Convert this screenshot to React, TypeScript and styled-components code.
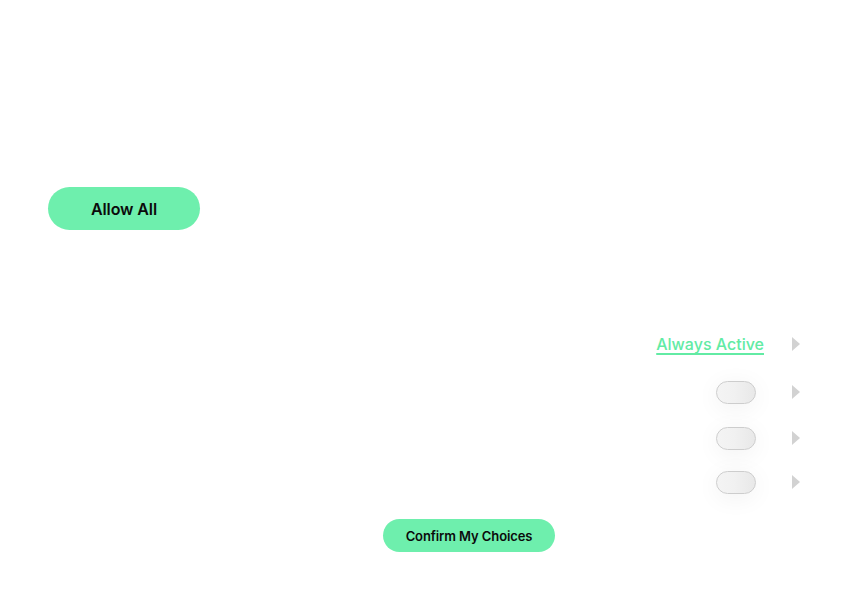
import React from 'react';
import styled, { createGlobalStyle } from 'styled-components';

const GlobalStyle = createGlobalStyle`
  html, body {
    margin: 0;
    padding: 0;
    background: #ffffff;
  }
  body {
    font-family: Inter, 'Liberation Sans', sans-serif;
    color: #111111;
  }
`;

const Panel = styled.div`
  width: 864px;
  height: 600px;
  box-sizing: border-box;
  padding: 187px 64px 0 48px;
  display: flex;
  flex-direction: column;
`;

const PillButton = styled.button<{ $size?: 'lg' | 'sm' }>`
  align-self: flex-start;
  border: none;
  border-radius: 999px;
  background: #6eefad;
  color: #0b0b0b;
  font-family: inherit;
  font-weight: 600;
  cursor: pointer;
  width: ${(p) => (p.$size === 'sm' ? '172px' : '152px')};
  height: ${(p) => (p.$size === 'sm' ? '33px' : '43px')};
  font-size: ${(p) => (p.$size === 'sm' ? '13px' : '16px')};
  letter-spacing: -0.1px;
`;

const CategoryList = styled.div`
  margin-top: 89px;
  display: flex;
  flex-direction: column;
`;

const CategoryRow = styled.div<{ $height: number }>`
  height: ${(p) => p.$height}px;
  display: flex;
  align-items: center;
  justify-content: flex-end;
  gap: 28px;
`;

const ActiveLabel = styled.a`
  color: #62eba4;
  font-size: 16px;
  font-weight: 500;
  text-decoration: underline;
  text-decoration-thickness: 1.5px;
  text-underline-offset: 3px;
  cursor: pointer;
`;

const Toggle = styled.span`
  display: block;
  width: 40px;
  height: 23px;
  box-sizing: border-box;
  border: 1px solid #cdcdcd;
  border-radius: 12px;
  background: linear-gradient(90deg, #f4f4f4 0%, #f1f1f1 45%, #e8e8e8 100%);
  box-shadow: 0 4px 24px rgba(0, 0, 0, 0.06);
  margin-right: 8px;
`;

const Caret = styled.span`
  display: block;
  width: 0;
  height: 0;
  border-top: 7px solid transparent;
  border-bottom: 7px solid transparent;
  border-left: 8px solid #d2d2d2;
`;

const Footer = styled.div`
  margin-top: 16px;
  padding-left: 335px;
  display: flex;
`;

const categories = [
  { id: 'necessary', active: true, height: 50 },
  { id: 'performance', active: false, height: 46 },
  { id: 'functional', active: false, height: 46 },
  { id: 'targeting', active: false, height: 42 },
];

export default function App() {
  return (
    <>
      <GlobalStyle />
      <Panel>
        <PillButton>Allow All</PillButton>
        <CategoryList>
          {categories.map((c) => (
            <CategoryRow key={c.id} $height={c.height}>
              {c.active ? <ActiveLabel>Always Active</ActiveLabel> : <Toggle />}
              <Caret />
            </CategoryRow>
          ))}
        </CategoryList>
        <Footer>
          <PillButton $size="sm">Confirm My Choices</PillButton>
        </Footer>
      </Panel>
    </>
  );
}
